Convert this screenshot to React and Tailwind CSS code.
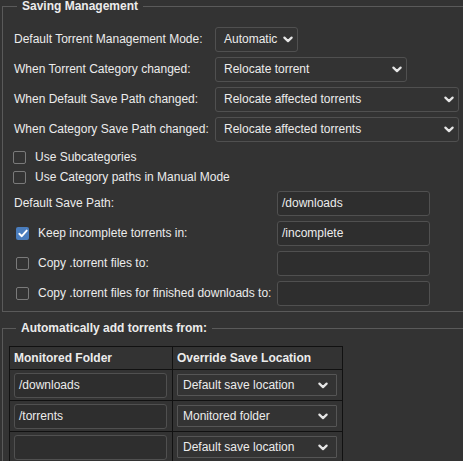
import React from 'react';

const font = { fontFamily: '"Liberation Sans", Arial, sans-serif' };

function Chevron() {
  return (
    <svg width="10" height="7" viewBox="0 0 10 7" className="shrink-0">
      <path d="M1.4 1.6 L5 5.1 L8.6 1.6" fill="none" stroke="#e6e6e6" strokeWidth="2.2" strokeLinecap="round" strokeLinejoin="round" />
    </svg>
  );
}

function Select({ value, width, table }) {
  return (
    <div
      className={`flex items-center justify-between bg-[#333333] border text-[12px] text-[#ececec] whitespace-nowrap ${
        table ? 'h-[22px] rounded-[1px] border-[#555] pl-[5px] pr-[8px]' : 'h-[25px] rounded-[3px] border-[#505050] pl-[8px] pr-[4px]'
      }`}
      style={{ width }}
    >
      <span>{value}</span>
      <Chevron />
    </div>
  );
}

function TextInput({ value }) {
  return (
    <div className="w-[153px] h-[25px] flex items-center bg-[#2e2e2e] border border-[#505050] rounded-[3px] pl-[4px] text-[12px] text-[#ececec]">
      {value}
    </div>
  );
}

function Checkbox({ checked }) {
  if (checked) {
    return (
      <div className="w-[13px] h-[13px] rounded-[2px] bg-[#4a7dbd] flex items-center justify-center shrink-0">
        <svg width="10" height="9" viewBox="0 0 10 9">
          <path d="M1.3 4.8 L3.8 7.2 L8.7 1.6" fill="none" stroke="#fff" strokeWidth="1.9" strokeLinecap="round" strokeLinejoin="round" />
        </svg>
      </div>
    );
  }
  return <div className="w-[13px] h-[13px] rounded-[2px] border border-[#7a7a7a] bg-[#333] shrink-0" />;
}

const modeRows = [
  { label: 'Default Torrent Management Mode:', value: 'Automatic', width: 83 },
  { label: 'When Torrent Category changed:', value: 'Relocate torrent', width: 192 },
  { label: 'When Default Save Path changed:', value: 'Relocate affected torrents', width: 244 },
  { label: 'When Category Save Path changed:', value: 'Relocate affected torrents', width: 244 },
];

const pathRows = [
  { label: 'Default Save Path:', value: '/downloads' },
  { label: 'Keep incomplete torrents in:', value: '/incomplete', check: true, checked: true },
  { label: 'Copy .torrent files to:', value: '', check: true },
  { label: 'Copy .torrent files for finished downloads to:', value: '', check: true },
];

const watched = [
  { folder: '/downloads', target: 'Default save location' },
  { folder: '/torrents', target: 'Monitored folder' },
  { folder: '', target: 'Default save location' },
];

export default function App() {
  return (
    <div className="w-[463px] h-[461px] overflow-hidden bg-[#333333] text-[#ececec] text-[12px]" style={font}>
      <div className="w-[490px] pl-[2px]">
        <fieldset className="border border-[#5a5a5a] pl-[6px] pt-3 pb-[3px]">
          <legend className="ml-2 px-[5px] font-bold text-[12px] leading-[12px]">Saving Management</legend>

          <div className="pl-[5px] whitespace-nowrap">
            {modeRows.map((r) => (
              <div key={r.label} className="flex items-center h-[30px]">
                <span className="w-[201px] shrink-0">{r.label}</span>
                <Select value={r.value} width={r.width} />
              </div>
            ))}

            <div className="mt-[3px]">
              <div className="flex items-center h-[20px] gap-[9px] -ml-px">
                <Checkbox />
                <span>Use Subcategories</span>
              </div>
              <div className="flex items-center h-[20px] gap-[9px] -ml-px">
                <Checkbox />
                <span>Use Category paths in Manual Mode</span>
              </div>
            </div>

            <div className="mt-[1px]">
              {pathRows.map((r) => (
                <div key={r.label} className="flex items-center h-[30px]">
                  <div className="w-[263px] shrink-0 flex items-center">
                    {r.check ? (
                      <div className="flex items-center gap-[9px] ml-[2px]">
                        <Checkbox checked={r.checked} />
                        <span>{r.label}</span>
                      </div>
                    ) : (
                      <span>{r.label}</span>
                    )}
                  </div>
                  <TextInput value={r.value} />
                </div>
              ))}
            </div>
          </div>
        </fieldset>

        <fieldset className="mt-[10px] border border-[#5a5a5a] pl-[6px] pt-3 pb-2">
          <legend className="ml-[7px] px-[5px] font-bold text-[12px] leading-[12px]">Automatically add torrents from:</legend>
          <table className="border-collapse border border-[#111]">
            <thead>
              <tr>
                <th className="w-[163px] border border-[#111] px-[4px] py-[4px] text-left font-bold leading-[14px]">Monitored Folder</th>
                <th className="w-[170px] border border-[#111] px-[4px] py-[4px] text-left font-bold leading-[14px]">Override Save Location</th>
              </tr>
            </thead>
            <tbody>
              {watched.map((w, i) => (
                <tr key={i}>
                  <td className="border border-[#111] pl-[4px] pr-[4px] py-[2px] h-[31px]">
                    <TextInput value={w.folder} />
                  </td>
                  <td className="border border-[#111] px-[4px] py-[2px]">
                    <Select value={w.target} width={160} table />
                  </td>
                </tr>
              ))}
            </tbody>
          </table>
        </fieldset>
      </div>
    </div>
  );
}
